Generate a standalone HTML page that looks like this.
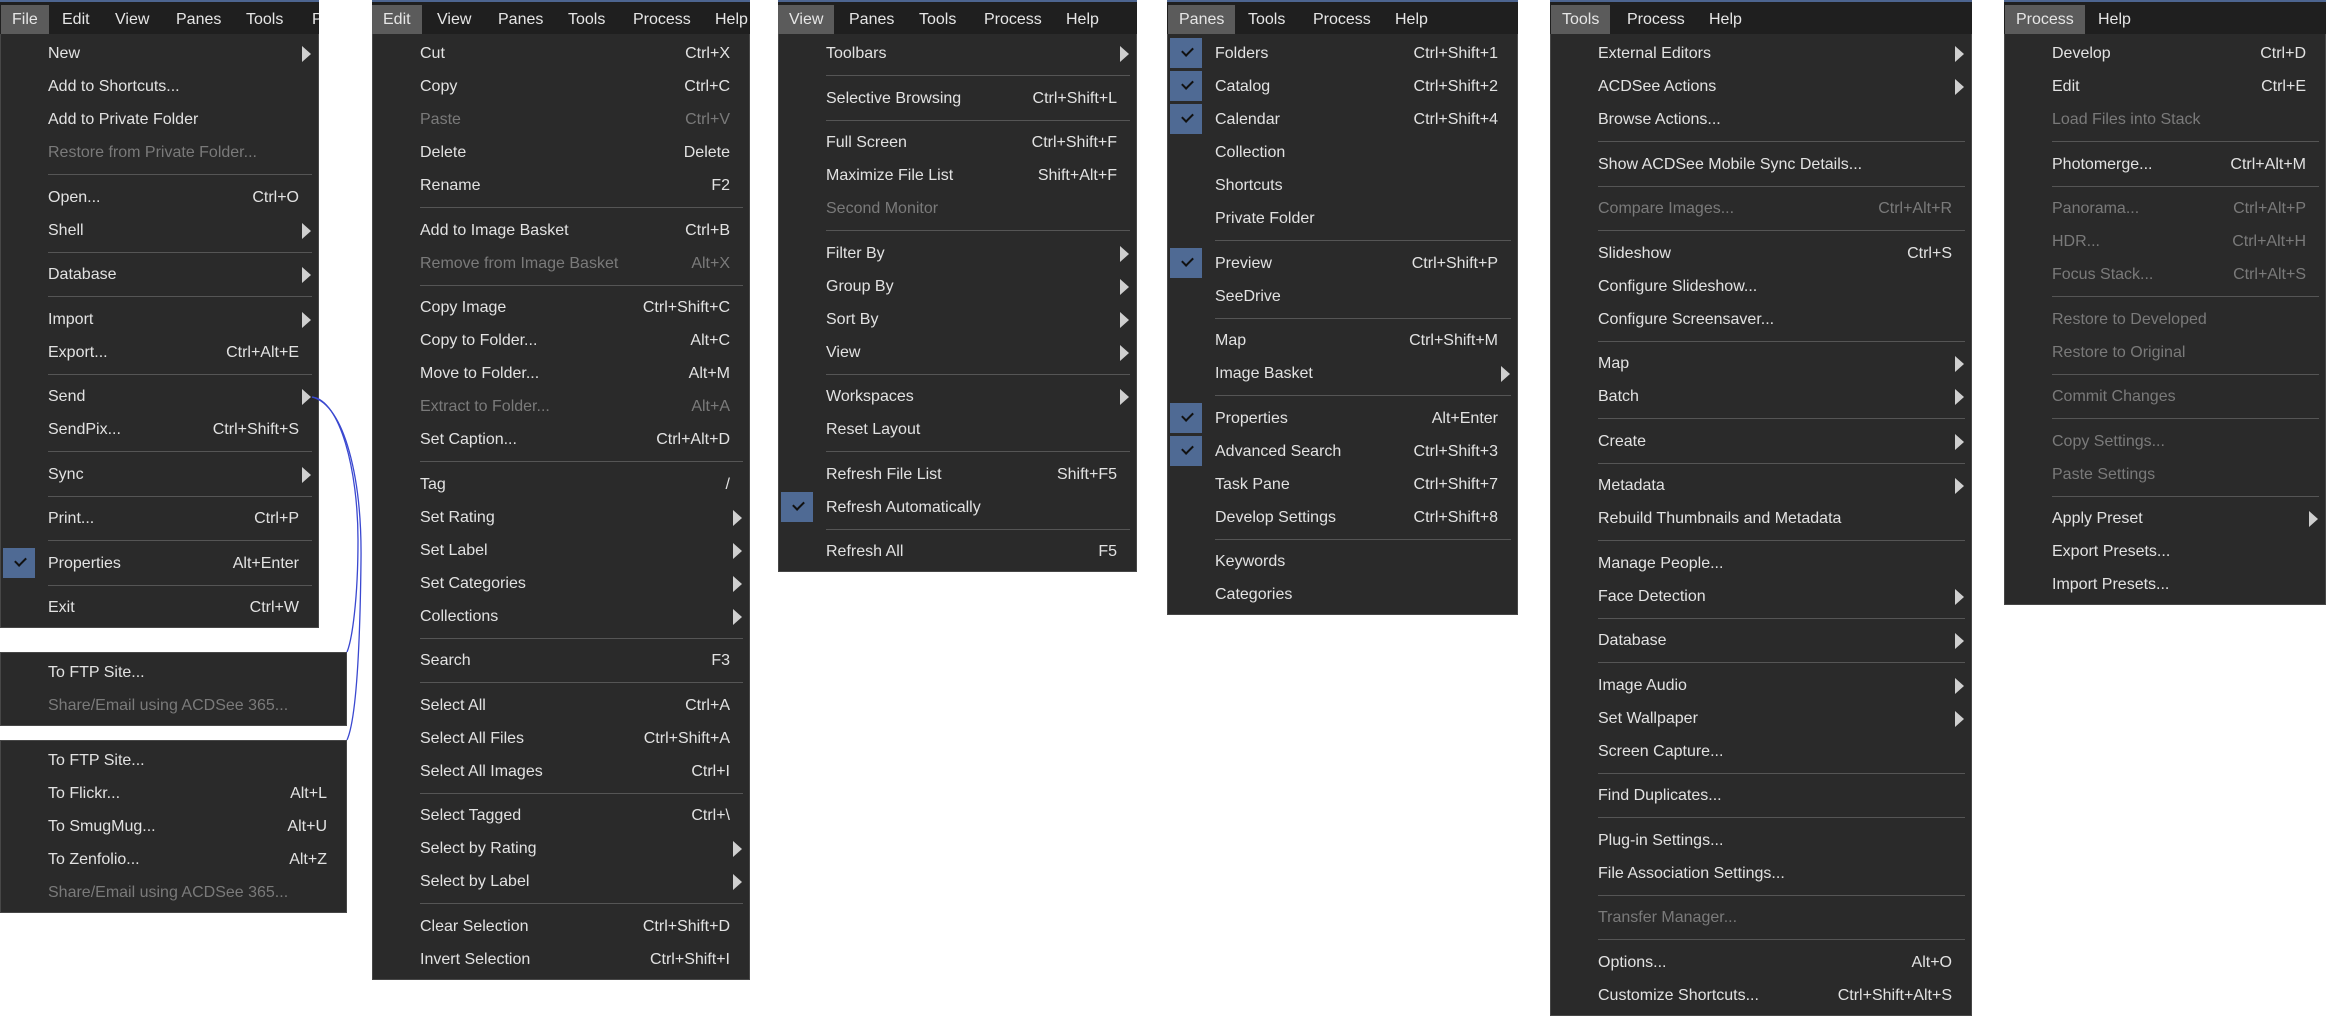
<!DOCTYPE html>
<html><head><meta charset="utf-8">
<style>
*{margin:0;padding:0;box-sizing:border-box}
html,body{width:2327px;height:1019px;background:#fff;overflow:hidden;font-family:"Liberation Sans",sans-serif;font-size:16px;color:#e2e2e2}
.m{position:absolute;top:0}
.bar{height:34px;background:#1f1f1f;border-top:2px solid #4d6590;position:relative;white-space:nowrap;overflow:hidden}
.bar span{position:absolute;top:3px;height:29px;line-height:29px;padding:0 11px;color:#e6e6e6}
.bar span.on{background:#5b5b5b}
.b{background:#2a2a2a;border:1px solid #474747;border-top:none;padding:3px 0}
.s .b{border-top:1px solid #474747}
.i{height:33px;line-height:33px;padding-left:47px;position:relative;white-space:nowrap}
.i.d{color:#7a7a7a}
.k{position:absolute;right:19px;top:0}
.a::after{content:"";position:absolute;right:7px;top:9px;border-left:9px solid #cfcfcf;border-top:8px solid transparent;border-bottom:8px solid transparent}
.c::before{content:"";position:absolute;left:2px;top:1px;width:32px;height:30px;background:#4f6a94}
.c::after{content:"";position:absolute;left:14px;top:10px;width:9px;height:5px;border-left:2px solid #111;border-bottom:2px solid #111;transform:rotate(-45deg)}
.p{height:11.5px;position:relative}
.p::after{content:"";position:absolute;left:47px;right:6px;top:5px;height:1px;background:#555}
</style></head><body>

<!-- FILE -->
<div class="m" style="left:0;width:319px">
<div class="bar"><span class="on" style="left:1px">File</span><span style="left:51px">Edit</span><span style="left:104px">View</span><span style="left:165px">Panes</span><span style="left:235px">Tools</span><span style="left:301px">Process</span></div>
<div class="b">
<div class="i a">New</div>
<div class="i">Add to Shortcuts...</div>
<div class="i">Add to Private Folder</div>
<div class="i d">Restore from Private Folder...</div>
<div class="p"></div>
<div class="i">Open...<span class="k">Ctrl+O</span></div>
<div class="i a">Shell</div>
<div class="p"></div>
<div class="i a">Database</div>
<div class="p"></div>
<div class="i a">Import</div>
<div class="i">Export...<span class="k">Ctrl+Alt+E</span></div>
<div class="p"></div>
<div class="i a">Send</div>
<div class="i">SendPix...<span class="k">Ctrl+Shift+S</span></div>
<div class="p"></div>
<div class="i a">Sync</div>
<div class="p"></div>
<div class="i">Print...<span class="k">Ctrl+P</span></div>
<div class="p"></div>
<div class="i c">Properties<span class="k">Alt+Enter</span></div>
<div class="p"></div>
<div class="i">Exit<span class="k">Ctrl+W</span></div>
</div></div>

<div class="m s" style="left:0;top:652px;width:347px">
<div class="b">
<div class="i">To FTP Site...</div>
<div class="i d">Share/Email using ACDSee 365...</div>
</div></div>

<div class="m s" style="left:0;top:740px;width:347px">
<div class="b">
<div class="i">To FTP Site...</div>
<div class="i">To Flickr...<span class="k">Alt+L</span></div>
<div class="i">To SmugMug...<span class="k">Alt+U</span></div>
<div class="i">To Zenfolio...<span class="k">Alt+Z</span></div>
<div class="i d">Share/Email using ACDSee 365...</div>
</div></div>

<svg style="position:absolute;left:0;top:0" width="2327" height="1019">
<path d="M312 397 C340 400 358 470 358 540 C358 600 352 640 347 652" fill="none" stroke="#3a48d0" stroke-width="1.3"/>
<path d="M312 397 C345 405 362 480 361 560 C360 650 356 720 347 740" fill="none" stroke="#3a48d0" stroke-width="1.3"/>
</svg>

<!-- EDIT -->
<div class="m" style="left:372px;width:378px">
<div class="bar"><span class="on" style="left:0">Edit</span><span style="left:54px">View</span><span style="left:115px">Panes</span><span style="left:185px">Tools</span><span style="left:250px">Process</span><span style="left:332px">Help</span></div>
<div class="b">
<div class="i">Cut<span class="k">Ctrl+X</span></div>
<div class="i">Copy<span class="k">Ctrl+C</span></div>
<div class="i d">Paste<span class="k">Ctrl+V</span></div>
<div class="i">Delete<span class="k">Delete</span></div>
<div class="i">Rename<span class="k">F2</span></div>
<div class="p"></div>
<div class="i">Add to Image Basket<span class="k">Ctrl+B</span></div>
<div class="i d">Remove from Image Basket<span class="k">Alt+X</span></div>
<div class="p"></div>
<div class="i">Copy Image<span class="k">Ctrl+Shift+C</span></div>
<div class="i">Copy to Folder...<span class="k">Alt+C</span></div>
<div class="i">Move to Folder...<span class="k">Alt+M</span></div>
<div class="i d">Extract to Folder...<span class="k">Alt+A</span></div>
<div class="i">Set Caption...<span class="k">Ctrl+Alt+D</span></div>
<div class="p"></div>
<div class="i">Tag<span class="k">/</span></div>
<div class="i a">Set Rating</div>
<div class="i a">Set Label</div>
<div class="i a">Set Categories</div>
<div class="i a">Collections</div>
<div class="p"></div>
<div class="i">Search<span class="k">F3</span></div>
<div class="p"></div>
<div class="i">Select All<span class="k">Ctrl+A</span></div>
<div class="i">Select All Files<span class="k">Ctrl+Shift+A</span></div>
<div class="i">Select All Images<span class="k">Ctrl+I</span></div>
<div class="p"></div>
<div class="i">Select Tagged<span class="k">Ctrl+\</span></div>
<div class="i a">Select by Rating</div>
<div class="i a">Select by Label</div>
<div class="p"></div>
<div class="i">Clear Selection<span class="k">Ctrl+Shift+D</span></div>
<div class="i">Invert Selection<span class="k">Ctrl+Shift+I</span></div>
</div></div>

<!-- VIEW -->
<div class="m" style="left:778px;width:359px">
<div class="bar"><span class="on" style="left:0">View</span><span style="left:60px">Panes</span><span style="left:130px">Tools</span><span style="left:195px">Process</span><span style="left:277px">Help</span></div>
<div class="b">
<div class="i a">Toolbars</div>
<div class="p"></div>
<div class="i">Selective Browsing<span class="k">Ctrl+Shift+L</span></div>
<div class="p"></div>
<div class="i">Full Screen<span class="k">Ctrl+Shift+F</span></div>
<div class="i">Maximize File List<span class="k">Shift+Alt+F</span></div>
<div class="i d">Second Monitor</div>
<div class="p"></div>
<div class="i a">Filter By</div>
<div class="i a">Group By</div>
<div class="i a">Sort By</div>
<div class="i a">View</div>
<div class="p"></div>
<div class="i a">Workspaces</div>
<div class="i">Reset Layout</div>
<div class="p"></div>
<div class="i">Refresh File List<span class="k">Shift+F5</span></div>
<div class="i c">Refresh Automatically</div>
<div class="p"></div>
<div class="i">Refresh All<span class="k">F5</span></div>
</div></div>

<!-- PANES -->
<div class="m" style="left:1167px;width:351px">
<div class="bar"><span class="on" style="left:1px">Panes</span><span style="left:70px">Tools</span><span style="left:135px">Process</span><span style="left:217px">Help</span></div>
<div class="b">
<div class="i c">Folders<span class="k">Ctrl+Shift+1</span></div>
<div class="i c">Catalog<span class="k">Ctrl+Shift+2</span></div>
<div class="i c">Calendar<span class="k">Ctrl+Shift+4</span></div>
<div class="i">Collection</div>
<div class="i">Shortcuts</div>
<div class="i">Private Folder</div>
<div class="p"></div>
<div class="i c">Preview<span class="k">Ctrl+Shift+P</span></div>
<div class="i">SeeDrive</div>
<div class="p"></div>
<div class="i">Map<span class="k">Ctrl+Shift+M</span></div>
<div class="i a">Image Basket</div>
<div class="p"></div>
<div class="i c">Properties<span class="k">Alt+Enter</span></div>
<div class="i c">Advanced Search<span class="k">Ctrl+Shift+3</span></div>
<div class="i">Task Pane<span class="k">Ctrl+Shift+7</span></div>
<div class="i">Develop Settings<span class="k">Ctrl+Shift+8</span></div>
<div class="p"></div>
<div class="i">Keywords</div>
<div class="i">Categories</div>
</div></div>

<!-- TOOLS -->
<div class="m" style="left:1550px;width:422px">
<div class="bar"><span class="on" style="left:1px">Tools</span><span style="left:66px">Process</span><span style="left:148px">Help</span></div>
<div class="b">
<div class="i a">External Editors</div>
<div class="i a">ACDSee Actions</div>
<div class="i">Browse Actions...</div>
<div class="p"></div>
<div class="i">Show ACDSee Mobile Sync Details...</div>
<div class="p"></div>
<div class="i d">Compare Images...<span class="k">Ctrl+Alt+R</span></div>
<div class="p"></div>
<div class="i">Slideshow<span class="k">Ctrl+S</span></div>
<div class="i">Configure Slideshow...</div>
<div class="i">Configure Screensaver...</div>
<div class="p"></div>
<div class="i a">Map</div>
<div class="i a">Batch</div>
<div class="p"></div>
<div class="i a">Create</div>
<div class="p"></div>
<div class="i a">Metadata</div>
<div class="i">Rebuild Thumbnails and Metadata</div>
<div class="p"></div>
<div class="i">Manage People...</div>
<div class="i a">Face Detection</div>
<div class="p"></div>
<div class="i a">Database</div>
<div class="p"></div>
<div class="i a">Image Audio</div>
<div class="i a">Set Wallpaper</div>
<div class="i">Screen Capture...</div>
<div class="p"></div>
<div class="i">Find Duplicates...</div>
<div class="p"></div>
<div class="i">Plug-in Settings...</div>
<div class="i">File Association Settings...</div>
<div class="p"></div>
<div class="i d">Transfer Manager...</div>
<div class="p"></div>
<div class="i">Options...<span class="k">Alt+O</span></div>
<div class="i">Customize Shortcuts...<span class="k">Ctrl+Shift+Alt+S</span></div>
</div></div>

<!-- PROCESS -->
<div class="m" style="left:2004px;width:322px">
<div class="bar"><span class="on" style="left:1px">Process</span><span style="left:83px">Help</span></div>
<div class="b">
<div class="i">Develop<span class="k">Ctrl+D</span></div>
<div class="i">Edit<span class="k">Ctrl+E</span></div>
<div class="i d">Load Files into Stack</div>
<div class="p"></div>
<div class="i">Photomerge...<span class="k">Ctrl+Alt+M</span></div>
<div class="p"></div>
<div class="i d">Panorama...<span class="k">Ctrl+Alt+P</span></div>
<div class="i d">HDR...<span class="k">Ctrl+Alt+H</span></div>
<div class="i d">Focus Stack...<span class="k">Ctrl+Alt+S</span></div>
<div class="p"></div>
<div class="i d">Restore to Developed</div>
<div class="i d">Restore to Original</div>
<div class="p"></div>
<div class="i d">Commit Changes</div>
<div class="p"></div>
<div class="i d">Copy Settings...</div>
<div class="i d">Paste Settings</div>
<div class="p"></div>
<div class="i a">Apply Preset</div>
<div class="i">Export Presets...</div>
<div class="i">Import Presets...</div>
</div></div>

</body></html>
